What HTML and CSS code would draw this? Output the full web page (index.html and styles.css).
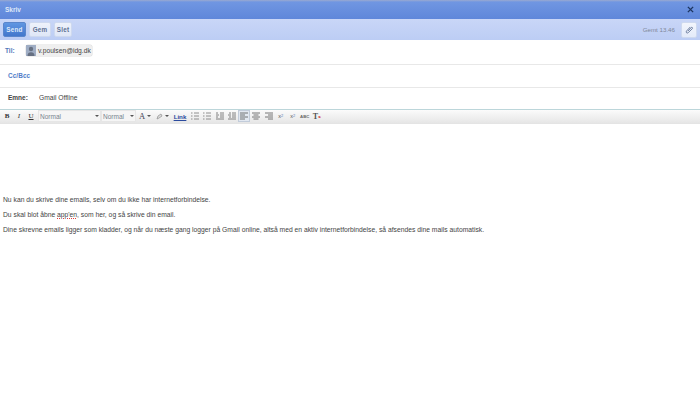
FILE: index.html
```html
<!DOCTYPE html>
<html lang="da">
<head>
<meta charset="utf-8">
<title>Skriv</title>
<link rel="stylesheet" href="styles.css">
</head>
<body>
<div class="app">
  <header class="titlebar">
    <span class="title">Skriv</span>
    <svg class="close" width="7" height="7" viewBox="0 0 8 8"><path d="M1 1l6 6M7 1L1 7" stroke="#1d3560" stroke-width="1.600"/></svg>
  </header>
  <div class="actions">
    <button class="btn primary">Send</button>
    <button class="btn gem">Gem</button>
    <button class="btn slet">Slet</button>
    <span class="saved">Gemt 13.46</span>
    <button class="attach" aria-label="Vedhæft">
      <svg width="9" height="9" viewBox="0 0 11 11" fill="none"><path d="M3.500 7.500l4-4.300c1-1 2.400.3 1.400 1.400L4 9.300C2.400 10.800.4 8.800 2 7.200L6.500 2.400" stroke="#6f80a0" stroke-width="1.200"/></svg>
    </button>
  </div>
  <div class="row row-to">
    <span class="label blue">Til:</span>
    <span class="chip">
      <svg class="avatar" width="10" height="11" viewBox="0 0 10 11"><rect width="10" height="11" fill="#9fadc4"/><circle cx="5" cy="4" r="2.200" fill="#667082"/><path d="M1.500 11c0-3 1.500-3.800 3.500-3.800S8.500 8 8.500 11z" fill="#667082"/></svg>
      <span>v.poulsen@idg.dk</span>
    </span>
  </div>
  <div class="row row-cc"><a class="ccbcc">Cc/Bcc</a></div>
  <div class="row row-subject">
    <span class="label dark">Emne:</span>
    <span class="subject">Gmail Offline</span>
  </div>
  <div class="toolbar">
    <span class="tool serif bold">B</span>
    <span class="tool serif italic">I</span>
    <span class="tool serif underline">U</span>
    <span class="select wide">Normal<i class="caret"></i></span>
    <span class="select narrow">Normal<i class="caret"></i></span>
    <span class="tool color serif letter">A<i class="caret"></i></span>
    <span class="tool color">
      <svg width="7" height="7" viewBox="0 0 7 7"><path d="M1 6l1-3 3-2 1 2-3 2z" fill="#ddd" stroke="#999" stroke-width=".8"/></svg>
      <i class="caret"></i>
    </span>
    <a class="link">Link</a>
    <span class="tool icon"><svg width="8" height="8" viewBox="0 0 8 8"><path d="M0 1h1.500M0 4h1.500M0 7h1.500M3 1h5M3 4h5M3 7h5" stroke="#777" stroke-width=".8"/></svg></span>
    <span class="tool icon"><svg width="8" height="8" viewBox="0 0 8 8"><path d="M0 1h1.500M0 4h1.500M0 7h1.500M3 1h5M3 4h5M3 7h5" stroke="#777" stroke-width=".8"/></svg></span>
    <span class="tool icon"><svg width="8" height="8" viewBox="0 0 8 8"><path d="M4 1h4M4 3h4M4 5h4M0 7h8M0 1h2M0 3h3M0 5h2" stroke="#666" stroke-width=".8"/></svg></span>
    <span class="tool icon"><svg width="8" height="8" viewBox="0 0 8 8"><path d="M4 1h4M4 3h4M4 5h4M0 7h8M1 1h2M0 3h3M1 5h2" stroke="#666" stroke-width=".8"/></svg></span>
    <span class="tool icon active"><svg width="8" height="8" viewBox="0 0 8 8"><path d="M0 1h8M0 3h5M0 5h8M0 7h5" stroke="#555" stroke-width=".8"/></svg></span>
    <span class="tool icon"><svg width="8" height="8" viewBox="0 0 8 8"><path d="M0 1h8M1.500 3h5M0 5h8M1.500 7h5" stroke="#555" stroke-width=".8"/></svg></span>
    <span class="tool icon"><svg width="8" height="8" viewBox="0 0 8 8"><path d="M0 1h8M3 3h5M0 5h8M3 7h5" stroke="#555" stroke-width=".8"/></svg></span>
    <span class="tool small">x<sub>2</sub></span>
    <span class="tool small">x<sup>2</sup></span>
    <span class="tool abc">ABC</span>
    <span class="tool clear serif">T<b class="x">x</b></span>
  </div>
  <main class="body">
    <p>Nu kan du skrive dine emails, selv om du ikke har internetforbindelse.</p>
    <p>Du skal blot åbne <span class="misspelled">app'en</span>, som her, og så skrive din email.</p>
    <p>Dine skrevne emails ligger som kladder, og når du næste gang logger på Gmail online, altså med en aktiv internetforbindelse, så afsendes dine mails automatisk.</p>
  </main>
</div>
</body>
</html>
```
FILE: styles.css
```css
* { box-sizing: border-box; }
html, body { margin: 0; padding: 0; background: #fff; }
body { font-family: "Liberation Sans", Arial, sans-serif; font-size: 7px; color: #444; overflow: hidden; }
.app { width: 700px; height: 412px; display: flex; flex-direction: column; }
.titlebar { height: 19px; flex: none; display: flex; align-items: center; justify-content: space-between; padding: 0 6px 1px 5px; background: linear-gradient(#9aa9d0 0, #7096e2 2px, #5f87da 100%); }
.title { color: #dfe8f9; font-weight: bold; font-size: 6.500px; }
.actions { height: 21px; flex: none; display: flex; align-items: center; gap: 3px; padding: 0 3px; background: linear-gradient(#c9d6f7, #bccdf4); }
.btn { height: 15px; width: 22px; padding: 0; border: 1px solid #ced9ef; border-radius: 2px; background: linear-gradient(#eef2fb, #dfe7f7); color: #5e6f92; font: bold 6.300px "Liberation Sans", Arial, sans-serif; letter-spacing: .25px; }
.btn.primary { width: 23px; background: linear-gradient(#6096e2, #4277cc); border-color: #5a86cc; color: #dfe9fa; }
.btn.slet { width: 18px; }
.saved { margin-left: auto; margin-right: 3px; color: #7f8798; font-size: 6.200px; }
.attach { width: 16px; height: 16px; padding: 0; display: flex; align-items: center; justify-content: center; border: 1px solid #ced9ef; border-radius: 2px; background: linear-gradient(#f2f5fc, #e4ebf9); }
.row { display: flex; align-items: center; flex: none; border-bottom: 1px solid #e8e8e8; }
.row-to { height: 25px; padding: 0 0 4px 5px; }
.row-cc { height: 23px; padding: 0 0 2px 8px; }
.row-subject { height: 22px; padding: 0 0 3px 8px; border-bottom: 1px solid #bcd6da; }
.label { font-weight: bold; font-size: 6.500px; }
.label.blue { color: #5078bb; width: 21px; }
.label.dark { color: #444; width: 31px; }
.chip { height: 11px; display: inline-flex; align-items: center; gap: 2px; padding-right: 1px; background: #efefef; border-radius: 2px; color: #444; font-size: 6.700px; box-shadow: 0 0 0 .5px #ddd; }
.avatar { display: block; }
.ccbcc { color: #4f7cc8; font-weight: bold; font-size: 6.400px; letter-spacing: .1px; }
.subject { color: #444; font-size: 6.700px; }
.toolbar { height: 14px; flex: none; display: flex; align-items: center; padding: 0 0 1px 1px; background: linear-gradient(#fbfbfb, #e6e6e6); border-bottom: 1px solid #e4e4e4; }
.tool { height: 12px; width: 12px; flex: none; display: flex; align-items: center; justify-content: center; font-size: 7px; color: #333; }
.serif { font-family: "Liberation Serif", serif; }
.bold { font-weight: bold; }
.italic { font-style: italic; }
.underline { text-decoration: underline; }
.select { height: 12px; flex: none; position: relative; display: flex; align-items: center; padding-left: 1px; background: #f5f5f5; border: 1px solid #e6e6e6; color: #78838f; font-size: 6.500px; }
.select.wide { width: 63px; margin-left: 1px; }
.select.narrow { width: 35px; margin-left: 0; }
.select .caret { position: absolute; right: 1px; top: 4px; }
.caret { display: inline-block; width: 0; height: 0; border-left: 2px solid transparent; border-right: 2px solid transparent; border-top: 2px solid #555; margin-left: 2px; }
.color { width: 16px; margin-left: 1px; }
.letter { font-size: 8.500px; color: #445; }
.link { width: 18px; margin-left: 1px; flex: none; color: #2a4a9e; font-weight: bold; font-size: 6.200px; text-decoration: underline; text-align: center; }
.icon { width: 12.250px; }
.active { background: #e2e8f1; border: 1px solid #c2ccda; }
.small { font-size: 5.500px; color: #555; }
.small sub, .small sup { font-size: 4px; line-height: 0; color: #5a7ab8; }
.abc { font-size: 4.300px; font-weight: bold; color: #666; }
.clear { font-size: 8px; font-weight: bold; position: relative; color: #555; }
.x { font-size: 5px; color: #d02020; }
.body { flex: 1; padding: 72px 3px 0; }
.body p { margin: 0 0 7.500px; line-height: 7.500px; font-size: 6.750px; color: #444; }
.misspelled { text-decoration: underline dotted #e04040 1px; text-underline-offset: 1px; }
```
